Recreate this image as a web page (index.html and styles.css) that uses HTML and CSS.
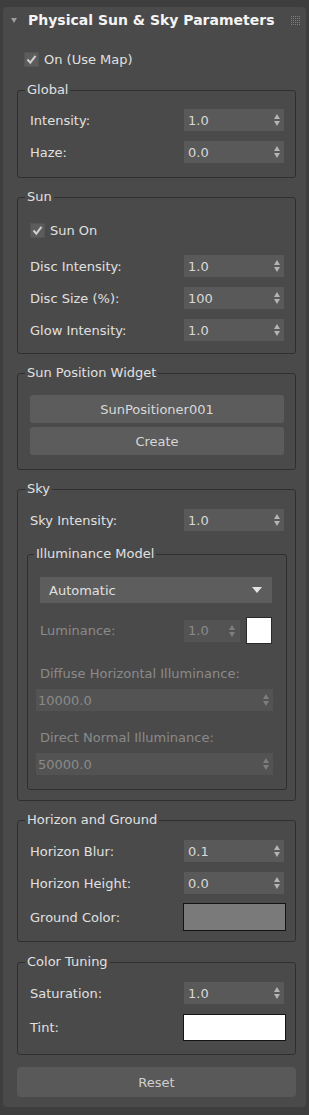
FILE: index.html
```html
<!DOCTYPE html>
<html lang="en">
<head>
    <meta charset="UTF-8">
    <title>Physical Sun &amp; Sky Parameters</title>
    <link rel="stylesheet" href="styles.css">
</head>
<body>
    <div class="panel">
        <div class="head">
            <span class="twisty"></span>
            <span class="title">Physical Sun &amp; Sky Parameters</span>
            <svg class="grip" width="9" height="9" viewBox="0 0 9 9">
                <defs><pattern id="dots" width="2" height="2" patternUnits="userSpaceOnUse"><rect width="1" height="1" fill="#7e7e7e"/></pattern></defs>
                <rect width="9" height="9" fill="url(#dots)"/>
            </svg>
        </div>

        <div class="check top">
            <span class="box"><svg width="11" height="11" viewBox="0 0 11 11"><path d="M1.5 5.5 L4.3 8.6 L9.5 1.8" fill="none" stroke="#cfcfcf" stroke-width="2"/></svg></span>
            On (Use Map)
        </div>

        <fieldset class="grp global">
            <legend>Global</legend>
            <div class="row"><span class="lbl">Intensity:</span><span class="spin">1.0<i class="arr"></i></span></div>
            <div class="row"><span class="lbl">Haze:</span><span class="spin">0.0<i class="arr"></i></span></div>
        </fieldset>

        <fieldset class="grp sun">
            <legend>Sun</legend>
            <div class="check">
                <span class="box"><svg width="11" height="11" viewBox="0 0 11 11"><path d="M1.5 5.5 L4.3 8.6 L9.5 1.8" fill="none" stroke="#cfcfcf" stroke-width="2"/></svg></span>
                Sun On
            </div>
            <div class="row after-check"><span class="lbl">Disc Intensity:</span><span class="spin">1.0<i class="arr"></i></span></div>
            <div class="row"><span class="lbl">Disc Size (%):</span><span class="spin">100<i class="arr"></i></span></div>
            <div class="row"><span class="lbl">Glow Intensity:</span><span class="spin">1.0<i class="arr"></i></span></div>
        </fieldset>

        <fieldset class="grp widget">
            <legend>Sun Position Widget</legend>
            <div class="btn">SunPositioner001</div>
            <div class="btn">Create</div>
        </fieldset>

        <fieldset class="grp sky">
            <legend>Sky</legend>
            <div class="row"><span class="lbl">Sky Intensity:</span><span class="spin">1.0<i class="arr"></i></span></div>

            <fieldset class="grp sub">
                <legend>Illuminance Model</legend>
                <div class="drop">Automatic<i class="caret"></i></div>
                <div class="row lum off">
                    <span class="lbl">Luminance:</span>
                    <span class="spin small">1.0<i class="arr"></i></span>
                    <span class="swatch white small"></span>
                </div>
                <div class="cap off">Diffuse Horizontal Illuminance:</div>
                <div class="spin wide off">10000.0<i class="arr"></i></div>
                <div class="cap off">Direct Normal Illuminance:</div>
                <div class="spin wide off">50000.0<i class="arr"></i></div>
            </fieldset>
        </fieldset>

        <fieldset class="grp horizon">
            <legend>Horizon and Ground</legend>
            <div class="row"><span class="lbl">Horizon Blur:</span><span class="spin">0.1<i class="arr"></i></span></div>
            <div class="row"><span class="lbl">Horizon Height:</span><span class="spin">0.0<i class="arr"></i></span></div>
            <div class="row tall"><span class="lbl">Ground Color:</span><span class="swatch grey"></span></div>
        </fieldset>

        <fieldset class="grp tuning">
            <legend>Color Tuning</legend>
            <div class="row"><span class="lbl">Saturation:</span><span class="spin">1.0<i class="arr"></i></span></div>
            <div class="row tint"><span class="lbl">Tint:</span><span class="swatch white"></span></div>
        </fieldset>

        <div class="reset">Reset</div>
    </div>
</body>
</html>
```

FILE: styles.css
```css
* { box-sizing: border-box; }
body { margin: 0; background: #3e3e3e; font-family: "DejaVu Sans", Verdana, sans-serif; font-size: 13px; color: #e0e0e0; }

.panel { margin: 7px 3px 0 3px; padding-bottom: 10px; background: #4a4a4a; border-radius: 4px; }

/* rollout header */
.head { display: flex; align-items: center; height: 26px; padding: 0 6px 0 8px; }
.twisty { width: 0; height: 0; border-left: 3.5px solid transparent; border-right: 3.5px solid transparent; border-top: 5px solid #9c9c9c; margin-right: 11px; }
.title { flex: 1; font-size: 14px; font-weight: bold; color: #f4f4f4; }
.grip { display: block; }

/* checkboxes */
.check { display: flex; align-items: center; gap: 5px; height: 22px; }
.check.top { margin: 15px 0 0 21px; }
.box { width: 15px; height: 15px; display: flex; align-items: center; justify-content: center; background: #5c5c5c; border: 1px solid #545454; }

/* groups */
.grp { margin: 11px 10px 0 14px; padding: 12px 11px 14px 12px; border: 1px solid #2f2f2f; border-radius: 3px; min-width: 0; }
.grp legend { padding: 0 2px; margin-left: -5px; line-height: 16px; }
.grp.global { margin-top: 12px; padding-top: 11px; }
.grp.sun { padding-top: 14px; padding-bottom: 12px; }
.grp.widget { padding-top: 14px; }
.grp.sky { padding-top: 12px; padding-bottom: 10px; }
.grp.horizon { padding-bottom: 10px; }
.grp.tuning { margin-top: 12px; padding-bottom: 13px; }
.grp.sub { margin: 15px -3px 0 -3px; padding: 15px 14px 14px 12px; }
.grp.sub legend { margin-left: -6px; }

.row { display: flex; align-items: center; height: 22px; margin-top: 10px; }
.row:first-of-type { margin-top: 0; }
.row.after-check { margin-top: 14px; }
.row.tall { height: 28px; margin-top: 9px; }
.row.tint { height: 27px; }
.lbl { flex: 1; }

/* spinners */
.spin { display: flex; align-items: center; justify-content: space-between; width: 100px; height: 22px; padding: 0 4px; background: #595959; color: #d8d8d8; }
.arr { display: flex; flex-direction: column; gap: 2px; }
.arr::before { content: ""; border-left: 3.5px solid transparent; border-right: 3.5px solid transparent; border-bottom: 5px solid #b4b4b4; }
.arr::after { content: ""; border-left: 3.5px solid transparent; border-right: 3.5px solid transparent; border-top: 5px solid #b4b4b4; }

.spin.small { width: 56px; padding-right: 5px; }
.spin.wide { width: auto; margin: 7px -1px 0 -4px; padding-left: 2px; }

/* colour swatches */
.swatch { width: 103px; height: 28px; margin-right: -2px; border: 1px solid #141414; }
.swatch.grey { background: #7a7a7a; }
.swatch.white { background: #ffffff; }
.row.tint .swatch { height: 27px; }
.swatch.small { width: 26px; height: 27px; margin: 0 0 0 6px; border-color: #2a2a2a; }

/* buttons */
.btn { height: 28px; display: flex; align-items: center; justify-content: center; background: #5c5c5c; border-radius: 3px; color: #d8d8d8; }
.btn + .btn { margin-top: 4px; }
.reset { margin: 12px 10px 0 14px; height: 30px; display: flex; align-items: center; justify-content: center; background: #595959; border-radius: 4px; color: #cfcfcf; }

/* illuminance model */
.drop { display: flex; align-items: center; justify-content: space-between; height: 26px; padding: 0 10px 0 9px; background: #5d5d5d; color: #e0e0e0; }
.caret { border-left: 5px solid transparent; border-right: 5px solid transparent; border-top: 6px solid #e2e2e2; }
.row.lum { height: 27px; margin-top: 14px; }
.cap { line-height: 16px; margin-top: 22px; }
.cap + .spin { margin-top: 7px; }
.spin.wide + .cap { margin-top: 19px; }

.off { color: #8a8a8a; }
.off .spin, .spin.off { background: #535353; color: #8a8a8a; }
.off .arr::before, .spin.off .arr::before { border-bottom-color: #7e7e7e; }
.off .arr::after, .spin.off .arr::after { border-top-color: #7e7e7e; }
```
